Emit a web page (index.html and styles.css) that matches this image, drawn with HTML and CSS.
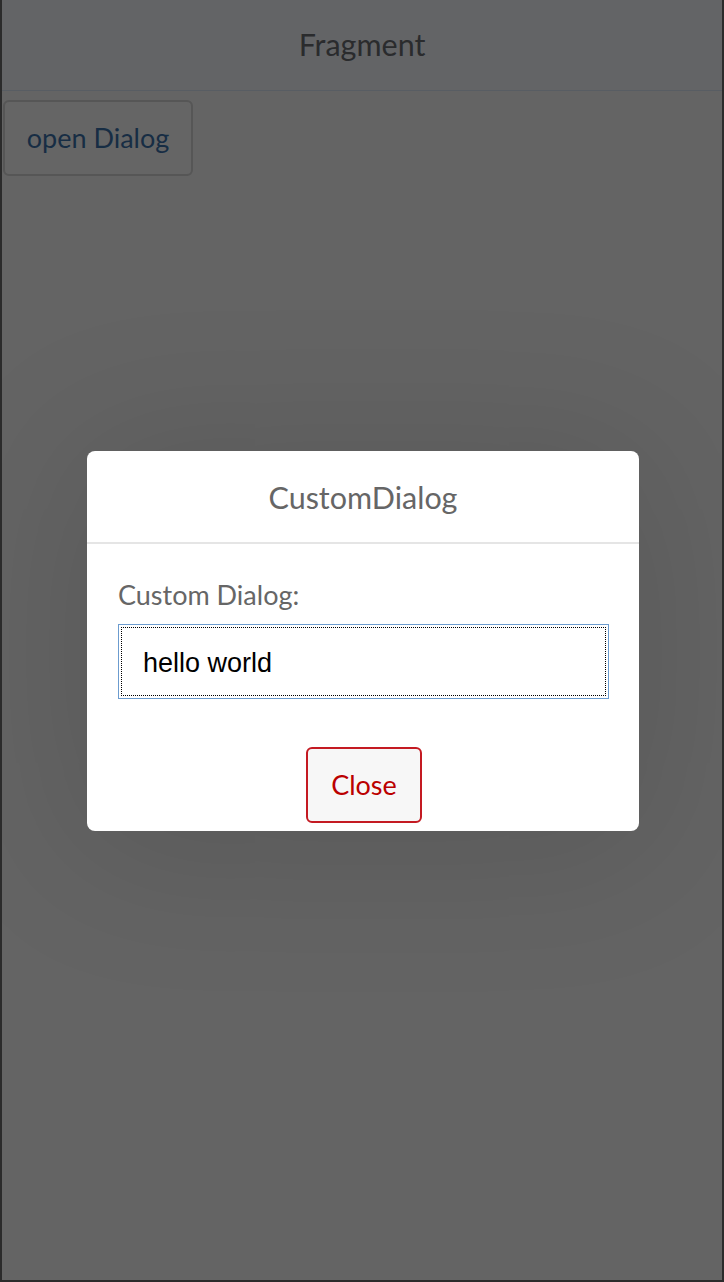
FILE: index.html
```html
<!DOCTYPE html>
<html lang="en">
<head>
<meta charset="utf-8">
<title>Fragment</title>
<link rel="stylesheet" href="styles.css">
</head>
<body>
<div class="frame">
  <header class="page-header">
    <h1 class="page-title">Fragment</h1>
  </header>
  <main class="page-content">
    <button class="open-btn" type="button">open Dialog</button>
  </main>
  <div class="dialog" role="dialog" aria-labelledby="dlg-title">
    <div class="dialog-header">
      <h2 class="dialog-title" id="dlg-title">CustomDialog</h2>
    </div>
    <div class="dialog-body">
      <label class="field-label" for="field">Custom Dialog:</label>
      <input class="field" id="field" type="text" value="hello world">
    </div>
    <div class="dialog-footer">
      <button class="close-btn" type="button">Close</button>
    </div>
  </div>
</div>
</body>
</html>
```
FILE: styles.css
```css
html, body {
  margin: 0;
  padding: 0;
  background: #2b2b2b;
}

.frame {
  position: relative;
  box-sizing: border-box;
  width: 724px;
  height: 1282px;
  border-left: 2px solid #2b2b2b;
  border-right: 2px solid #2b2b2b;
  border-bottom: 2px solid #2b2b2b;
  background: #646464;
  font-family: "Lato", "Noto Sans", sans-serif;
  overflow: hidden;
}

.page-header {
  height: 90px;
  border-bottom: 1px solid #585d63;
  background: #636466;
  display: flex;
  align-items: center;
  justify-content: center;
}

.page-title {
  margin: 0;
  font-size: 30.5px;
  font-weight: 400;
  color: #2a2b2d;
  line-height: 1;
  padding-bottom: 2px;
}

.page-content {
  padding: 9px 0 0 1px;
}

.open-btn {
  box-sizing: border-box;
  width: 190px;
  height: 76px;
  border: 2px solid #565656;
  border-radius: 6px;
  background: #656565;
  color: #172d44;
  font-family: "Lato", "Noto Sans", sans-serif;
  font-size: 27px;
  padding: 0 0 2px;
}

.dialog {
  position: absolute;
  left: 85px;
  top: 451px;
  width: 552px;
  height: 380px;
  background: #ffffff;
  border-radius: 8px;
  box-shadow: 0 10px 160px 10px rgba(0, 0, 0, 0.12);
  display: flex;
  flex-direction: column;
}

.dialog-header {
  height: 91px;
  border-bottom: 2px solid #e5e5e5;
  display: flex;
  align-items: center;
  justify-content: center;
}

.dialog-title {
  margin: 0;
  font-size: 30.5px;
  font-weight: 400;
  color: #666666;
  line-height: 1;
  padding-top: 2px;
}

.dialog-body {
  padding: 35px 31px 0;
  display: flex;
  flex-direction: column;
}

.field-label {
  font-size: 27px;
  line-height: 32px;
  color: #666666;
  margin-bottom: 13px;
}

.field {
  box-sizing: border-box;
  width: 491px;
  height: 75px;
  border: 1px solid #6c9ccf;
  border-radius: 0;
  outline: 1px dotted #000000;
  outline-offset: -4px;
  background: #ffffff;
  padding: 3px 0 0 24px;
  margin: 0;
  font-family: "Liberation Sans", Arial, sans-serif;
  font-size: 27px;
  color: #000000;
}

.dialog-footer {
  margin-top: auto;
  padding-bottom: 8px;
  display: flex;
  justify-content: center;
}

.close-btn {
  box-sizing: border-box;
  width: 116px;
  height: 76px;
  margin-left: 2px;
  border: 2px solid #c41a22;
  border-radius: 6px;
  background: #f7f7f7;
  color: #bb0000;
  font-family: "Lato", "Noto Sans", sans-serif;
  font-size: 27px;
  padding: 0 0 2px;
}
```
